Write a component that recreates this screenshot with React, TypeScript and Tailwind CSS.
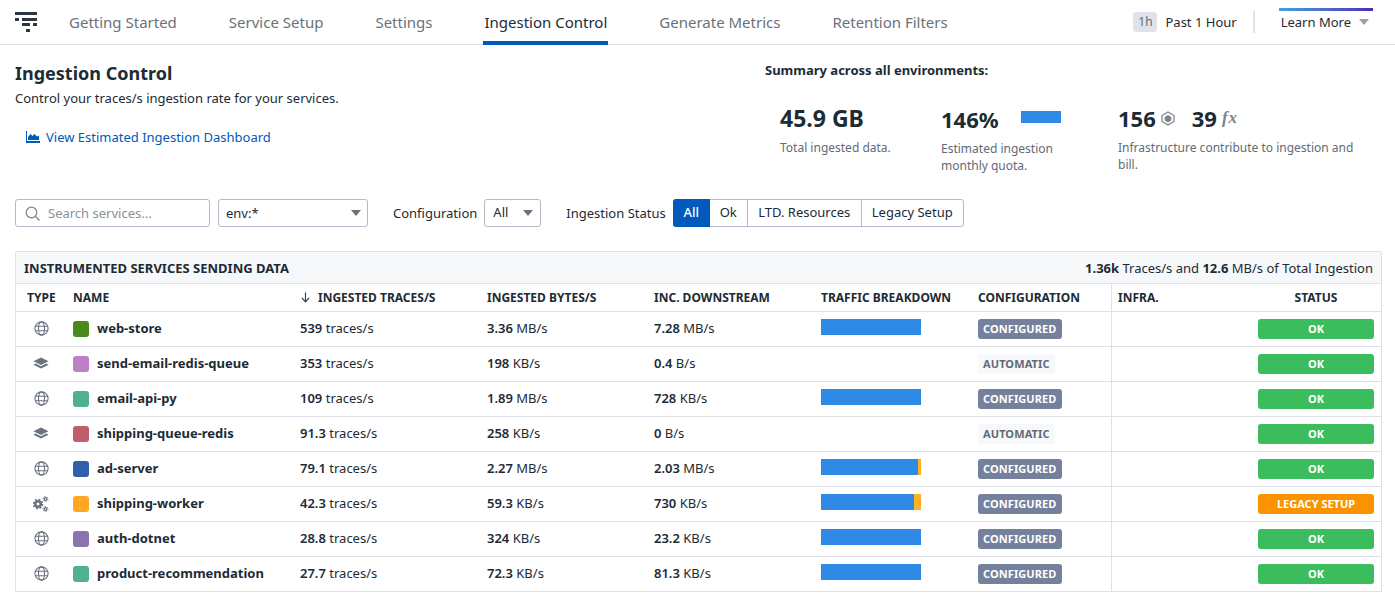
import React from "react";

const font = { fontFamily: '"Noto Sans", sans-serif' };

function Globe() {
  return (
    <svg width="15" height="15" viewBox="0 0 15 15" fill="none" stroke="#6b7280" strokeWidth="1.1">
      <circle cx="7.5" cy="7.5" r="6.6" />
      <ellipse cx="7.5" cy="7.5" rx="3" ry="6.6" />
      <path d="M1.2 5.3h12.6M1.2 9.7h12.6" />
    </svg>
  );
}

function Layers() {
  return (
    <svg className="-ml-px" width="16" height="13" viewBox="0 0 16 13" fill="#6b7280">
      <path d="M8 0.5 15.5 4.3 8 8 0.5 4.3Z" />
      <path d="M2.6 6.6 8 9.3l5.4-2.7 2.1 1.1L8 11.6.5 7.7Z" />
    </svg>
  );
}

function Gears() {
  return (
    <svg className="-ml-px" width="16" height="16" viewBox="0 0 16 16" fill="none" stroke="#6b7280">
      <circle cx="5" cy="8" r="2.8" strokeWidth="2.6" />
      <circle cx="5" cy="8" r="4.6" strokeWidth="1.5" strokeDasharray="1.8 1.8" />
      <circle cx="12.5" cy="3" r="1.4" strokeWidth="1.3" />
      <circle cx="12.5" cy="3" r="2.5" strokeWidth="1" strokeDasharray="1.2 1.4" />
      <circle cx="12.5" cy="13" r="1.4" strokeWidth="1.3" />
      <circle cx="12.5" cy="13" r="2.5" strokeWidth="1" strokeDasharray="1.2 1.4" />
    </svg>
  );
}

function Caret({ className }: { className: string }) {
  return <span className={`w-0 h-0 border-x-[5px] border-x-transparent border-t-[6px] ${className}`} />;
}

type Row = {
  type: "web" | "queue" | "worker";
  color: string;
  name: string;
  traces: string;
  bytes: string;
  bytesUnit: string;
  down: string;
  downUnit: string;
  bar: number | null;
  auto?: boolean;
  legacy?: boolean;
};

const rows: Row[] = [
  { type: "web", color: "#4a8a1c", name: "web-store", traces: "539", bytes: "3.36", bytesUnit: "MB/s", down: "7.28", downUnit: "MB/s", bar: 100 },
  { type: "queue", color: "#bd7fc6", name: "send-email-redis-queue", traces: "353", bytes: "198", bytesUnit: "KB/s", down: "0.4", downUnit: "B/s", bar: null, auto: true },
  { type: "web", color: "#4fb094", name: "email-api-py", traces: "109", bytes: "1.89", bytesUnit: "MB/s", down: "728", downUnit: "KB/s", bar: 100 },
  { type: "queue", color: "#c05f6a", name: "shipping-queue-redis", traces: "91.3", bytes: "258", bytesUnit: "KB/s", down: "0", downUnit: "B/s", bar: null, auto: true },
  { type: "web", color: "#325fad", name: "ad-server", traces: "79.1", bytes: "2.27", bytesUnit: "MB/s", down: "2.03", downUnit: "MB/s", bar: 97 },
  { type: "worker", color: "#fea723", name: "shipping-worker", traces: "42.3", bytes: "59.3", bytesUnit: "KB/s", down: "730", downUnit: "KB/s", bar: 93, legacy: true },
  { type: "web", color: "#8c72ae", name: "auth-dotnet", traces: "28.8", bytes: "324", bytesUnit: "KB/s", down: "23.2", downUnit: "KB/s", bar: 100 },
  { type: "web", color: "#4fb094", name: "product-recommendation", traces: "27.7", bytes: "72.3", bytesUnit: "KB/s", down: "81.3", downUnit: "KB/s", bar: 100 },
];

const tabs = ["Getting Started", "Service Setup", "Settings", "Ingestion Control", "Generate Metrics", "Retention Filters"];
const grid = "grid grid-cols-[57px_227px_187px_167px_167px_157px_133px_270px]";

export default function App() {
  return (
    <div style={font} className="w-[1395px] h-[593px] overflow-hidden bg-white text-[#1c2b34] text-[13px]">
      <header className="h-[45px] border-b border-[#e0e0ea] flex items-stretch pl-[15px]">
        <svg className="mt-[12px]" width="22" height="20" viewBox="0 0 22 20" fill="#2b3640">
          <rect x="0" y="0" width="22" height="3" />
          <rect x="0" y="6" width="4" height="3" />
          <rect x="7" y="6" width="15" height="3" />
          <rect x="7" y="11" width="8" height="3" />
          <rect x="18" y="11" width="4" height="3" />
          <rect x="11" y="17" width="4" height="3" />
        </svg>
        <nav className="flex ml-[32px] gap-[52px] text-[15px]">
          {tabs.map((t) => (
            <div
              key={t}
              className={
                t === "Ingestion Control"
                  ? "pt-[11px] -mx-px px-px text-[#1c2b34] border-b-4 border-[#0059bb] h-[45px]"
                  : "pt-[11px] text-[#6a7279]"
              }
            >
              {t}
            </div>
          ))}
        </nav>
        <div className="ml-auto flex items-start pt-[12px] pr-[26px]">
          <span className="bg-[#e0e3ec] rounded-[3px] w-[24px] h-[20px] flex items-center justify-center text-[#5f6b75] text-[12px]">1h</span>
          <span className="ml-[8px] h-[20px] leading-[20px]">Past 1 Hour</span>
          <span className="ml-[16px] -mt-px w-[2px] h-[22px] bg-[#e0e3ec]" />
          <div className="ml-[26px] relative flex items-center h-[20px]">
            <span className="absolute -left-[2px] -top-[4px] w-[94px] h-[3px] bg-gradient-to-r from-[#3ba4d8] to-[#4c28b4]" />
            <span className="mt-[1px]">Learn More</span>
            <Caret className="ml-[8px] border-t-[#9aa0a8]" />
          </div>
        </div>
      </header>

      <section className="h-[154px] pl-[15px] flex">
        <div className="w-[750px]">
          <h1 className="mt-[16px] text-[18px] leading-[24px] font-bold">Ingestion Control</h1>
          <p className="mt-[3px] leading-[20px]">Control your traces/s ingestion rate for your services.</p>
          <a className="mt-[19px] ml-[11px] flex items-center gap-[6px] text-[#0059bb] leading-[20px]">
            <svg width="14" height="12" viewBox="0 0 14 12" fill="#0059bb">
              <path d="M0 0h1v10h13v2H0z" />
              <path d="M2 9V6l2.5-3 2 2L8.500 3 11 5.500l2-1V9z" />
            </svg>
            View Estimated Ingestion Dashboard
          </a>
        </div>
        <div className="flex-1">
          <div className="mt-[15px] leading-[20px] font-bold">Summary across all environments:</div>
          <div className="flex mt-[23px] ml-[15px]">
            <div className="w-[161px]">
              <div className="text-[23px] leading-[30px] font-bold">45.9 GB</div>
              <div className="mt-[6px] text-[12px] leading-[17px] text-[#5f6b75]">Total ingested data.</div>
            </div>
            <div className="w-[177px]">
              <div className="flex items-start h-[30px]">
                <span className="w-[80px] text-[22px] leading-[32px] font-bold">146%</span>
                <span className="mt-[8px] w-[40px] h-[12px] bg-[#2f8ae6]" />
              </div>
              <div className="mt-[7px] w-[130px] text-[12px] leading-[17px] text-[#5f6b75]">Estimated ingestion monthly quota.</div>
            </div>
            <div className="w-[250px]">
              <div className="flex items-center h-[30px] text-[22px] font-bold">
                <span>156</span>
                <svg className="ml-[5px]" width="14" height="15" viewBox="0 0 14 15" fill="none">
                  <path d="M7 1 13 4.500v6L7 14 1 10.500v-6Z" stroke="#7c848c" strokeWidth="1.300" />
                  <path d="M7 4 10.300 6v3.500L7 11.500 3.700 9.500V6Z" fill="#7c848c" />
                </svg>
                <span className="ml-[17px]">39</span>
                <span className="ml-[5px] -mt-[1px] text-[17px] italic font-bold tracking-[1px] text-[#7c848c]" style={{ fontFamily: '"Liberation Serif", serif' }}>fx</span>
              </div>
              <div className="mt-[6px] text-[12px] leading-[17px] text-[#5f6b75]">Infrastructure contribute to ingestion and bill.</div>
            </div>
          </div>
        </div>
      </section>

      <div className="h-[52px] pl-[15px] flex items-start">
        <div className="w-[195px] h-[28px] border border-[#b5b9c8] rounded-[3px] flex items-center pl-[9px] gap-[8px]">
          <svg width="15" height="15" viewBox="0 0 15 15" fill="none" stroke="#7c848c" strokeWidth="1.200">
            <circle cx="6.500" cy="6.500" r="5.300" />
            <path d="m10.500 10.500 4 4" />
          </svg>
          <span className="mt-[1px] text-[#8a9199]">Search services...</span>
        </div>
        <div className="ml-[8px] w-[150px] h-[28px] border border-[#b5b9c8] rounded-[3px] flex items-center justify-between pl-[7px] pr-[6px]">
          <span className="mt-[1px]">env:*</span>
          <Caret className="border-t-[#6a7279]" />
        </div>
        <span className="ml-[25px] leading-[28px]">Configuration</span>
        <div className="ml-[7px] w-[57px] h-[28px] border border-[#b5b9c8] rounded-[3px] flex items-center justify-between pl-[8px] pr-[7px]">
          <span>All</span>
          <Caret className="border-t-[#6a7279]" />
        </div>
        <span className="ml-[25px] leading-[28px]">Ingestion Status</span>
        <div className="ml-[7px] h-[28px] flex border border-[#b5b9c8] rounded-[3px]">
          <span className="w-[37px] -my-px -ml-px bg-[#0059bb] text-white rounded-l-[3px] flex items-center justify-center font-medium">All</span>
          <span className="w-[38px] border-r border-[#b5b9c8] flex items-center justify-center">Ok</span>
          <span className="w-[114px] border-r border-[#b5b9c8] flex items-center justify-center">LTD. Resources</span>
          <span className="w-[101px] flex items-center justify-center">Legacy Setup</span>
        </div>
      </div>

      <div className="ml-[15px] w-[1367px] border-x border-t border-[#e0e0ea] rounded-t-[3px]">
        <div className="h-[32px] bg-[#f7f8fa] border-b border-[#e0e0ea] flex items-center justify-between pl-[8px] pr-[8px]">
          <span className="mt-[2px] font-bold">INSTRUMENTED SERVICES SENDING DATA</span>
          <span className="mt-[2px]">
            <b className="font-bold">1.36k</b> Traces/s and <b className="font-bold">12.6</b> MB/s of Total Ingestion
          </span>
        </div>
        <div className={`${grid} h-[28px] border-b border-[#e0e0ea] items-center text-[12px] font-bold`}>
          <span className="pl-[11px]">TYPE</span>
          <span>NAME</span>
          <span className="flex items-center gap-[7px]">
            <svg width="11" height="11" viewBox="0 0 11 11" fill="none" stroke="#3a4650" strokeWidth="1.200">
              <path d="M5.500 0.500v9M2 6l3.500 3.800L9 6" />
            </svg>
            INGESTED TRACES/S
          </span>
          <span>INGESTED BYTES/S</span>
          <span>INC. DOWNSTREAM</span>
          <span>TRAFFIC BREAKDOWN</span>
          <span>CONFIGURATION</span>
          <span className="h-full flex items-center border-l border-[#e0e0ea] pl-[6px] relative">
            INFRA.
            <span className="absolute right-[7px] w-[116px] text-center">STATUS</span>
          </span>
        </div>
        {rows.map((r) => (
          <div key={r.name} className={`${grid} h-[35px] border-b border-[#e0e0ea] items-center`}>
            <span className="pl-[18px] -mt-[1px] flex items-center">
              {r.type === "web" ? <Globe /> : r.type === "queue" ? <Layers /> : <Gears />}
            </span>
            <span className="flex items-center gap-[8px] font-bold">
              <span className="w-[16px] h-[16px] rounded-[3px]" style={{ backgroundColor: r.color }} />
              {r.name}
            </span>
            <span><b className="font-semibold">{r.traces}</b> traces/s</span>
            <span><b className="font-semibold">{r.bytes}</b> {r.bytesUnit}</span>
            <span><b className="font-semibold">{r.down}</b> {r.downUnit}</span>
            <span className="w-[100px] h-[16px] -mt-[4px] flex">
              {r.bar !== null && (
                <>
                  <span className="h-full bg-[#2f8ae6]" style={{ width: `${r.bar}%` }} />
                  <span className="h-full flex-1 bg-[#fdb022]" />
                </>
              )}
            </span>
            <span>
              {r.auto ? (
                <span className="inline-flex h-[20px] items-center px-[5px] rounded-[3px] bg-[#f7f8fa] text-[#5f6b75] text-[11px] font-bold tracking-[0.1px]">AUTOMATIC</span>
              ) : (
                <span className="inline-flex h-[20px] items-center px-[5px] rounded-[3px] bg-[#75809c] text-white text-[11px] font-bold tracking-[0.1px]">CONFIGURED</span>
              )}
            </span>
            <span className="h-full border-l border-[#e0e0ea] flex items-center justify-end pr-[7px]">
              <span className={`w-[116px] h-[20px] rounded-[3px] flex items-center justify-center text-white text-[11px] font-bold ${r.legacy ? "bg-[#f99300]" : "bg-[#3bbd5d]"}`}>
                {r.legacy ? "LEGACY SETUP" : "OK"}
              </span>
            </span>
          </div>
        ))}
      </div>
    </div>
  );
}
